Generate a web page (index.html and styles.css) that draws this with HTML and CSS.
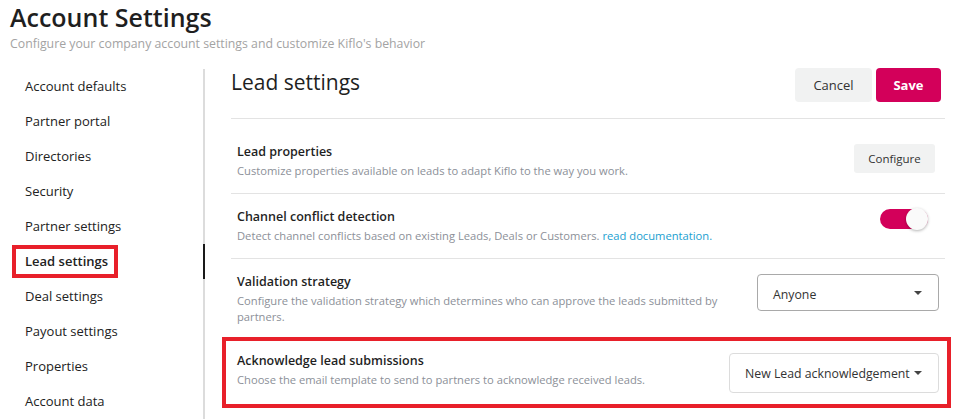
FILE: index.html
```html
<!DOCTYPE html>
<html>
<head>
<meta charset="utf-8">
<link rel="stylesheet" href="styles.css">
</head>
<body>
<header class="page-head">
  <h1 class="page-title">Account Settings</h1>
  <p class="page-sub">Configure your company account settings and customize Kiflo's behavior</p>
</header>
<div class="layout">
  <nav class="sidebar">
    <a class="nav-item">Account defaults</a>
    <a class="nav-item">Partner portal</a>
    <a class="nav-item">Directories</a>
    <a class="nav-item">Security</a>
    <a class="nav-item">Partner settings</a>
    <a class="nav-item active">Lead settings</a>
    <a class="nav-item">Deal settings</a>
    <a class="nav-item">Payout settings</a>
    <a class="nav-item">Properties</a>
    <a class="nav-item">Account data</a>
  </nav>
  <main class="content">
    <div class="content-head">
      <h2 class="content-title">Lead settings</h2>
      <div class="actions">
        <button class="btn btn-light">Cancel</button>
        <button class="btn btn-primary">Save</button>
      </div>
    </div>
    <div class="row row-first">
      <div class="row-text">
        <div class="row-title">Lead properties</div>
        <div class="row-desc">Customize properties available on leads to adapt Kiflo to the way you work.</div>
      </div>
      <button class="btn-config">Configure</button>
    </div>
    <div class="row">
      <div class="row-text">
        <div class="row-title">Channel conflict detection</div>
        <div class="row-desc">Detect channel conflicts based on existing Leads, Deals or Customers. <a class="link">read documentation.</a></div>
      </div>
      <div class="toggle"><span class="knob"></span></div>
    </div>
    <div class="row">
      <div class="row-text narrow">
        <div class="row-title">Validation strategy</div>
        <div class="row-desc">Configure the validation strategy which determines who can approve the leads submitted by partners.</div>
      </div>
      <div class="select select-a"><span class="select-label">Anyone</span><span class="caret"></span></div>
    </div>
    <div class="row row-last highlighted">
      <div class="row-text">
        <div class="row-title">Acknowledge lead submissions</div>
        <div class="row-desc">Choose the email template to send to partners to acknowledge received leads.</div>
      </div>
      <div class="select select-b"><span>New Lead acknowledgement</span><span class="caret"></span></div>
    </div>
  </main>
</div>
</body>
</html>
```

FILE: styles.css
```css
*, *::before, *::after { box-sizing: border-box; }
body {
  margin: 0;
  font-family: "Open Sans", "Noto Sans", sans-serif;
  color: #222;
  background: #fff;
  width: 976px;
  height: 419px;
  overflow: hidden;
}
.page-head { padding: 1px 10px 0; }
.page-title {
  margin: 0;
  font-size: 25px;
  line-height: 32px;
  font-weight: 600;
  color: #1f1f1f;
}
.page-sub {
  margin: 2px 0 0;
  font-size: 12.3px;
  line-height: 18px;
  color: #a3a3a3;
}
.layout {
  display: flex;
  margin-top: 16px;
}
.sidebar {
  width: 205px;
  flex: none;
  border-right: 2px solid #dcdcdc;
  display: flex;
  flex-direction: column;
}
.nav-item {
  position: relative;
  display: block;
  height: 35px;
  line-height: 35px;
  padding-left: 25px;
  font-size: 13px;
  color: #222;
}
.nav-item.active { font-weight: 600; }
.nav-item.active::after {
  content: "";
  position: absolute;
  right: -2px;
  top: 0;
  width: 2px;
  height: 35px;
  background: #1a1a1a;
}
.nav-item.active::before {
  content: "";
  position: absolute;
  left: 12px;
  top: 1px;
  width: 106px;
  height: 33px;
  border: 4px solid #e8202a;
}
.content {
  margin-left: 26px;
  width: 714px;
}
.content-head {
  display: flex;
  justify-content: space-between;
  align-items: flex-start;
  padding-bottom: 16px;
  border-bottom: 1px solid #e3e3e3;
}
.content-title {
  margin: 0;
  font-size: 21px;
  line-height: 26px;
  font-weight: 400;
  color: #1f1f1f;
}
.actions {
  display: flex;
  gap: 4px;
  margin-right: 4px;
  margin-top: -1px;
}
.btn {
  height: 34px;
  border: none;
  border-radius: 4px;
  font-family: inherit;
  font-size: 13px;
}
.btn-light {
  width: 77px;
  background: #f1f2f2;
  color: #333;
}
.btn-primary {
  width: 65px;
  background: #d3005a;
  color: #fff;
  font-weight: 700;
}
.row {
  display: flex;
  justify-content: space-between;
  align-items: flex-start;
  padding: 14px 0 14px 6px;
  border-bottom: 1px solid #e3e3e3;
}
.row-first { padding-top: 24px; }
.row-last { border-bottom: none; padding-top: 12px; }
.row-text { flex: 1; }
.row-text.narrow { max-width: 500px; }
.row-title {
  font-size: 12.5px;
  line-height: 18px;
  font-weight: 600;
  color: #1f1f1f;
}
.row-desc {
  margin-top: 2px;
  font-size: 11.2px;
  line-height: 16px;
  color: #8c9098;
}
.link { color: #1aa0d0; }
.btn-config {
  margin-top: 1px;
  margin-right: 10px;
  width: 81px;
  height: 29px;
  border: none;
  border-radius: 3px;
  background: #f1f2f2;
  color: #333;
  font-family: inherit;
  font-size: 11.5px;
}
.toggle {
  position: relative;
  margin-top: 1px;
  margin-right: 17px;
  width: 48px;
  height: 20px;
  border-radius: 10px;
  background: #d3005a;
}
.knob {
  position: absolute;
  right: 0;
  top: -1px;
  width: 22px;
  height: 22px;
  border-radius: 50%;
  background: #fafafa;
  box-shadow: 0 1px 3px rgba(0,0,0,0.3);
}
.select {
  margin-top: 1px;
  margin-right: 6px;
  display: flex;
  align-items: center;
  justify-content: space-between;
  border-radius: 4px;
  font-size: 12.3px;
  color: #333;
}
.select-a {
  width: 182px;
  height: 37px;
  padding: 0 16px 0 15px;
  border: 1px solid #a9a9a9;
}
.select-label { padding-top: 3px; }
.select-b {
  width: 210px;
  height: 40px;
  padding: 0 16px 0 15px;
  border: 1px solid #dcdcdc;
}
.caret {
  width: 0;
  height: 0;
  border-left: 4px solid transparent;
  border-right: 4px solid transparent;
  border-top: 4px solid #444;
}
.highlighted { position: relative; }
.highlighted::before {
  content: "";
  position: absolute;
  left: -9px;
  right: -6px;
  top: -3px;
  height: 71px;
  border: 4px solid #e8202a;
  pointer-events: none;
}
```
